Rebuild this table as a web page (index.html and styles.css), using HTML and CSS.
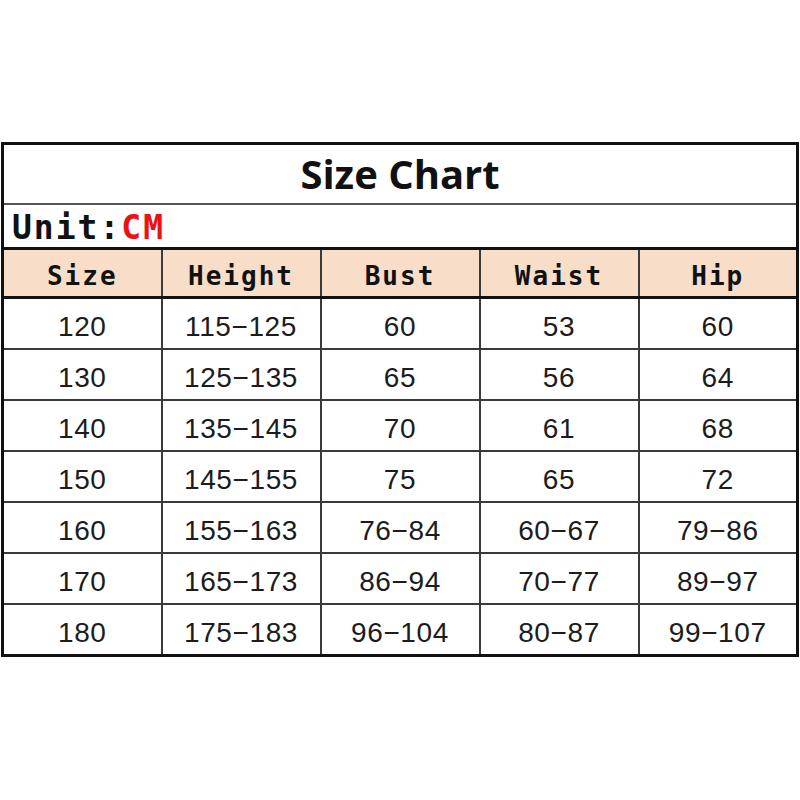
FILE: index.html
```html
<!DOCTYPE html>
<html>
<head>
<meta charset="utf-8">
<link rel="stylesheet" href="styles.css">
</head>
<body>
<div class="page">
<table class="chart">
  <colgroup><col class="c"><col class="c"><col class="c"><col class="c"><col class="c"></colgroup>
  <tr class="title-row"><td colspan="5">Size Chart</td></tr>
  <tr class="unit-row"><td colspan="5">Unit:<span class="cm">CM</span></td></tr>
  <tr class="head-row"><th>Size</th><th>Height</th><th>Bust</th><th>Waist</th><th>Hip</th></tr>
  <tr class="data"><td>120</td><td>115−125</td><td>60</td><td>53</td><td>60</td></tr>
  <tr class="data"><td>130</td><td>125−135</td><td>65</td><td>56</td><td>64</td></tr>
  <tr class="data"><td>140</td><td>135−145</td><td>70</td><td>61</td><td>68</td></tr>
  <tr class="data"><td>150</td><td>145−155</td><td>75</td><td>65</td><td>72</td></tr>
  <tr class="data"><td>160</td><td>155−163</td><td>76−84</td><td>60−67</td><td>79−86</td></tr>
  <tr class="data"><td>170</td><td>165−173</td><td>86−94</td><td>70−77</td><td>89−97</td></tr>
  <tr class="data"><td>180</td><td>175−183</td><td>96−104</td><td>80−87</td><td>99−107</td></tr>
</table>
</div>
</body>
</html>
```
FILE: styles.css
```css
html, body { margin: 0; padding: 0; background: #fff; }
.page { padding: 142px 1px 0 1px; }
.chart {
  width: 798px;
  border-collapse: collapse;
  border: 3px solid #111;
  table-layout: fixed;
  font-family: "Liberation Sans", Arial, sans-serif;
  color: #1c1c1c;
}
.chart td, .chart th {
  border: 2px solid #3a3a3a;
  text-align: center;
  padding: 0;
  font-weight: normal;
}
.title-row td {
  height: 58px;
  font-family: "Open Sans", "Noto Sans", sans-serif;
  font-weight: 700;
  font-size: 40px;
  line-height: 58px;
  color: #111;
  border-bottom: 2px solid #555;
}
.unit-row td {
  height: 38px;
  text-align: left;
  font-family: "DejaVu Sans Mono", "Liberation Mono", monospace;
  font-weight: bold;
  font-size: 33px;
  letter-spacing: 2px;
  padding-left: 8px;
  color: #111;
  line-height: 38px;
  padding-top: 4px;
}
.cm { color: #ee1111; }
.head-row th {
  height: 40px;
  line-height: 40px;
  background: #f8dec9;
  font-family: "DejaVu Sans Mono", "Liberation Mono", monospace;
  font-weight: bold;
  font-size: 26px;
  letter-spacing: 2px;
  color: #111;
  border-top: 3px solid #111;
  border-bottom: 3px solid #111;
  padding-top: 6px;
}
.data td {
  height: 43px;
  line-height: 43px;
  font-size: 28px;
  letter-spacing: 0.6px;
  padding-top: 6px;
}
```
